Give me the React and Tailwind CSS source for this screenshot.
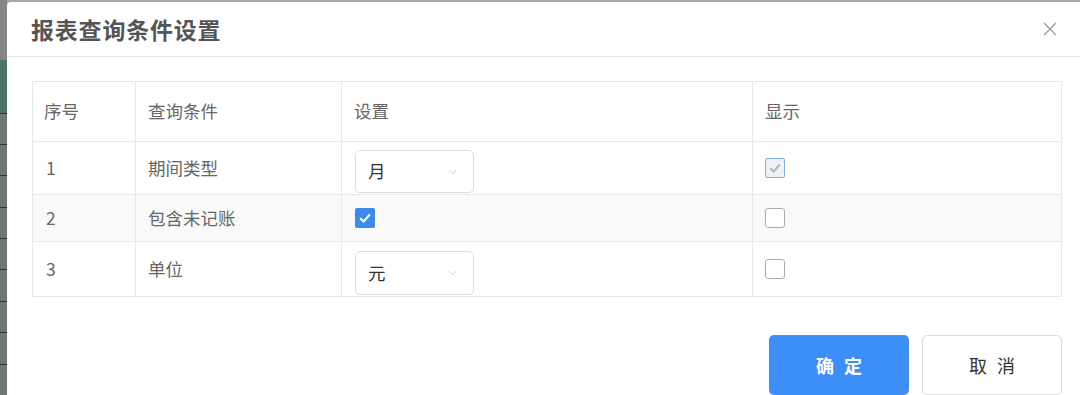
import { useState } from 'react';

const rows = [
  { no: '1', name: '期间类型', type: 'select', value: '月', show: 'disabled', h: 'h-[53px]' },
  { no: '2', name: '包含未记账', type: 'check', value: true, show: false, h: 'h-[47px]', bg: 'bg-[#f9f9f9]' },
  { no: '3', name: '单位', type: 'select', value: '元', show: false, h: 'h-[55px]' },
];

function Check({ on }) {
  return (
    <svg viewBox="0 0 14 14" className="w-[14px] h-[14px]">
      <path d="M2.2 7.2 L5.6 10.4 L11.8 3.6" fill="none" stroke={on ? '#fff' : '#b8b8b8'} strokeWidth="2.2" />
    </svg>
  );
}

function Checkbox({ state }) {
  if (state === true)
    return (
      <span className="flex items-center justify-center w-[20px] h-[20px] rounded-[2px] bg-[#3b8beb]">
        <Check on />
      </span>
    );
  if (state === 'disabled')
    return (
      <span className="flex items-center justify-center w-[20px] h-[20px] rounded-[2px] border-[1.5px] border-[#86ace0] bg-[#eef2f7]">
        <Check />
      </span>
    );
  return <span className="block w-[20px] h-[20px] rounded-[3px] border-[1.5px] border-[#aaa] bg-white" />;
}

function Select({ value, h }) {
  return (
    <div className={`flex items-center justify-between w-[119px] ${h} border border-[#dcdcdc] rounded-[5px] pl-[12px] pr-[16px] text-[#333] bg-white`}>
      <span>{value}</span>
      <svg viewBox="0 0 10 6" className="w-[9px] h-[6px]">
        <path d="M1 1 L5 5 L9 1" fill="none" stroke="#c4c4c4" strokeWidth="1" />
      </svg>
    </div>
  );
}

export default function App() {
  const [data] = useState(rows);
  const font = { fontFamily: '"Noto Sans CJK SC", "Noto Sans", sans-serif' };

  return (
    <div className="w-[1080px] h-[395px] overflow-hidden flex bg-[#a9a9a9]" style={font}>
      <div className="w-[7px] shrink-0 flex flex-col">
        <div className="h-[60px] bg-[#858585]" />
        <div className="h-[53px] bg-[#4c7168]" />
        {[0, 1, 2, 3, 4, 5, 6, 7, 8].map(i => (
          <div key={i} className="h-[31.5px] bg-[#6f7773] border-t border-[#2f3331]" />
        ))}
      </div>
      <div className="flex-1 mt-[2px] rounded-tl-[4px] bg-white flex flex-col">
        <div className="h-[55px] shrink-0 flex items-center justify-between pl-[24px] pr-[23px] border-b border-[#e6e6e6]">
          <h1 className="text-[23px] font-bold text-[#555] tracking-[0.8px]">报表查询条件设置</h1>
          <svg viewBox="0 0 16 16" className="w-[16px] h-[16px]">
            <path d="M2 2 L14 14 M14 2 L2 14" stroke="#9a9a9a" strokeWidth="1.4" />
          </svg>
        </div>
        <div className="pl-[25px] pr-[19px] pt-[24px]">
          <table className="w-[1029px] table-fixed border-collapse text-[17.5px] text-[#666]">
            <colgroup>
              <col className="w-[103px]" />
              <col className="w-[206px]" />
              <col className="w-[411px]" />
              <col className="w-[309px]" />
            </colgroup>
            <thead>
              <tr className="h-[60px]">
                <th className="border border-[#e8e8e8] text-left font-normal pl-[11px]">序号</th>
                <th className="border border-[#e8e8e8] text-left font-normal pl-[12px]">查询条件</th>
                <th className="border border-[#e8e8e8] text-left font-normal pl-[12px]">设置</th>
                <th className="border border-[#e8e8e8] text-left font-normal pl-[12px]">显示</th>
              </tr>
            </thead>
            <tbody>
              {data.map(r => (
                <tr key={r.no} className={`${r.h} ${r.bg || ''}`}>
                  <td className="border border-[#e8e8e8] pl-[13px]">{r.no}</td>
                  <td className="border border-[#e8e8e8] pl-[12px]">{r.name}</td>
                  <td className={`border border-[#e8e8e8] pl-[13px] ${r.type === 'select' ? 'align-bottom pb-[1px]' : ''}`}>
                    {r.type === 'select' ? (
                      <Select value={r.value} h={r.no === '1' ? 'h-[43px]' : 'h-[44px]'} />
                    ) : (
                      <Checkbox state={r.value} />
                    )}
                  </td>
                  <td className="border border-[#e8e8e8] pl-[12px]">
                    <Checkbox state={r.show} />
                  </td>
                </tr>
              ))}
            </tbody>
          </table>
          <div className="flex justify-end gap-[13px] mt-[38px]">
            <button className="w-[140px] h-[60px] rounded-[5px] bg-[#3e8ef7] text-white text-[18px] font-bold tracking-[10px] pl-[10px]">确定</button>
            <button className="w-[140px] h-[60px] rounded-[5px] border border-[#dcdcdc] bg-white text-[#333] text-[18px] font-normal tracking-[10px] pl-[10px]">取消</button>
          </div>
        </div>
      </div>
    </div>
  );
}
